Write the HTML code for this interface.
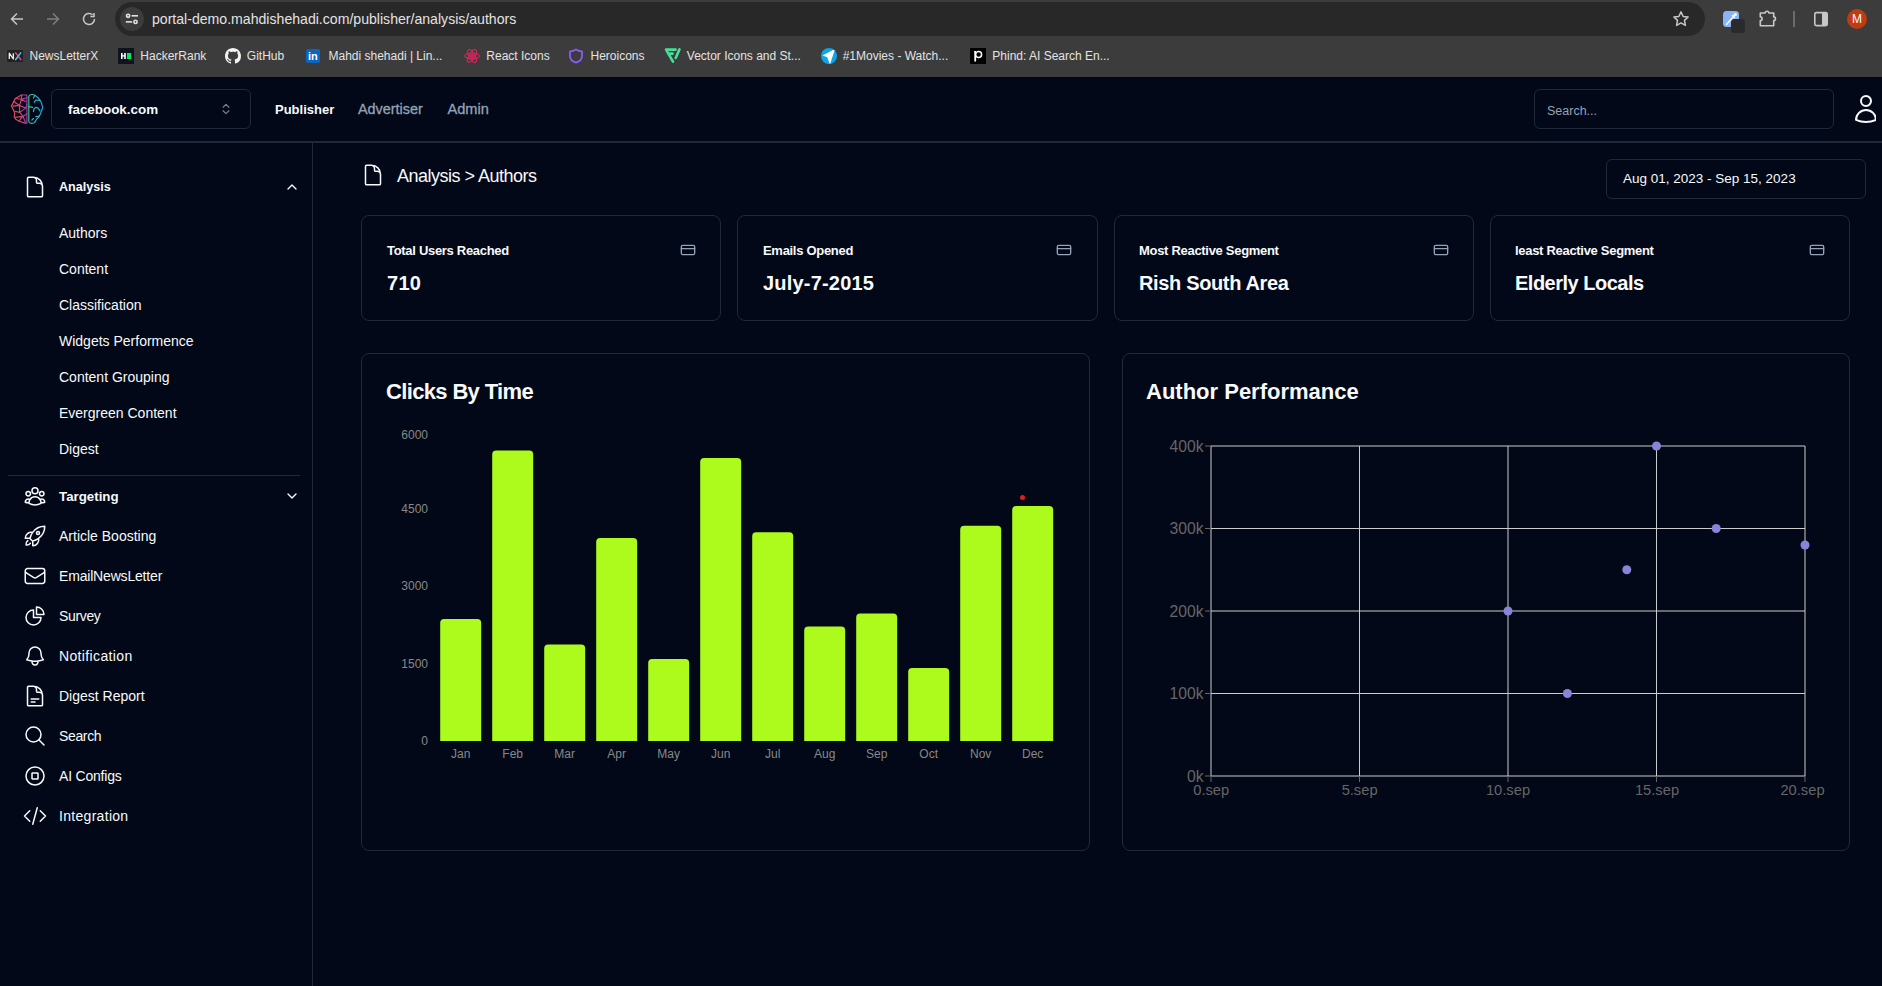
<!DOCTYPE html>
<html><head><meta charset="utf-8"><title>Analysis - Authors</title>
<style>
*{box-sizing:border-box;margin:0;padding:0}
html,body{width:1882px;height:986px;overflow:hidden;background:#020817;font-family:"Liberation Sans",sans-serif}
.t{position:absolute;line-height:1;white-space:nowrap}
.abs{position:absolute}
svg{position:absolute;overflow:visible}
</style></head><body>
<div class="abs" style="left:0;top:0;width:1882px;height:77px;background:#3c3c3c"></div>
<div class="abs" style="left:115px;top:2px;width:1590px;height:34px;border-radius:17px;background:#282828"></div>
<div class="abs" style="left:120px;top:7px;width:24px;height:24px;border-radius:12px;background:#3c3c3c"></div>
<svg style="left:126px;top:13px" width="12" height="12" viewBox="0 0 12 12" fill="none" stroke="#e3e3e3" stroke-width="1.6">
<circle cx="2.1" cy="2.8" r="1.6"/><line x1="5.6" y1="2.8" x2="12" y2="2.8"/><line x1="-0.2" y1="8.9" x2="6.2" y2="8.9"/><circle cx="9.5" cy="8.9" r="1.6"/></svg>
<svg style="left:9px;top:11px" width="16" height="16" viewBox="0 0 16 16" fill="none" stroke="#c7c7c7" stroke-width="1.5">
<path d="M14 8H2.5M8 2.5L2.5 8L8 13.5"/></svg>
<svg style="left:45px;top:11px" width="16" height="16" viewBox="0 0 16 16" fill="none" stroke="#7e7e7e" stroke-width="1.5">
<path d="M2 8h11.5M8 2.5L13.5 8L8 13.5"/></svg>
<svg style="left:81px;top:11px" width="16" height="16" viewBox="0 0 16 16" fill="none" stroke="#c7c7c7" stroke-width="1.5">
<path d="M13.5 8A5.5 5.5 0 1 1 11.6 3.8"/><path d="M13 2v3.6H9.4" /></svg>
<div class="t" style="left:152px;top:12.06px;font-size:14.1px;color:#e3e3e3;font-weight:normal;">portal-demo.mahdishehadi.com/publisher/analysis/authors</div>
<svg style="left:1672px;top:10px" width="18" height="18" viewBox="0 0 24 24" fill="none" stroke="#c7c7c7" stroke-width="2" stroke-linejoin="round">
<path d="M12 2.5l2.9 6.1 6.6.8-4.9 4.5 1.3 6.6L12 17.2l-5.9 3.3 1.3-6.6-4.9-4.5 6.6-.8z"/></svg>
<div class="abs" style="left:1723px;top:11px;width:16px;height:16px;border-radius:3.5px;background:#8ab4f8"></div>
<svg style="left:1723px;top:11px" width="16" height="16" viewBox="0 0 16 16" fill="none" stroke="#fff" stroke-linecap="round"><path d="M3.5 13.5L11 5" stroke-width="1.3"/><path d="M9.5 4.5l2 2" stroke-width="1.6"/><circle cx="12.3" cy="3.5" r="1.6" fill="#fff" stroke="none"/></svg>
<div class="abs" style="left:1731px;top:18.5px;width:14px;height:14px;border-radius:3.5px;background:#2a2a2a"></div>
<svg style="left:1758px;top:9px" width="20" height="19" viewBox="0 0 20 19" fill="none" stroke="#c7c7c7" stroke-width="1.6" stroke-linejoin="round">
<path d="M2.3 4H7.2A1.8 1.8 0 0 1 10.8 4H15.7V7.9A1.8 1.8 0 0 1 15.7 11.5V16.7H2.3V11.5A1.8 1.8 0 0 0 2.3 7.9Z"/></svg>
<div class="abs" style="left:1793px;top:11px;width:2px;height:16px;background:#6b6b6b"></div>
<svg style="left:1813px;top:11px" width="16" height="16" viewBox="0 0 16 16">
<rect x="1.8" y="1.6" width="12.4" height="13" rx="1.5" fill="none" stroke="#c7c7c7" stroke-width="1.6"/><rect x="9" y="1.8" width="5.2" height="12.6" fill="#c7c7c7"/></svg>
<div class="abs" style="left:1847px;top:9px;width:20px;height:20px;border-radius:10px;background:#c13b10"></div>
<div class="t" style="left:1857px;transform:translateX(-50%);top:13.34px;font-size:12px;color:#ffffff;font-weight:normal;">M</div>
<svg style="left:7px;top:50px" width="16" height="12" viewBox="0 0 16 12"><rect width="16" height="12" fill="#222"/><path d="M2.3 9V3.2L6.3 9V3.2" fill="none" stroke="#f2f2f2" stroke-width="1.3" stroke-linejoin="round"/><path d="M8.6 2.8L13.8 9.6" stroke="#e8456a" stroke-width="1.4" stroke-linecap="round"/><path d="M13.8 2.8L8.6 9.6" stroke="#4cc3e0" stroke-width="1.4" stroke-linecap="round"/><path d="M11.8 7L13.8 9.6" stroke="#c23ccf" stroke-width="1.4" stroke-linecap="round"/><path d="M10.6 7L8.6 9.6" stroke="#2ccfb0" stroke-width="1.4" stroke-linecap="round"/></svg>
<div class="t" style="left:29.5px;top:50.04px;font-size:12px;color:#e3e3e3;font-weight:normal;">NewsLetterX</div>
<div class="abs" style="left:118px;top:48px;width:16px;height:16px;background:#0e141e"></div>
<svg style="left:118px;top:48px" width="16" height="16" viewBox="0 0 16 16"><path d="M3 5h1.6v2.2h1.6V5h1.6v6H6.2V8.6H4.6V11H3z" fill="#fff"/><rect x="9" y="5" width="4.2" height="6" fill="#00ea64"/></svg>
<div class="t" style="left:140.3px;top:50.04px;font-size:12px;color:#e3e3e3;font-weight:normal;">HackerRank</div>
<svg style="left:225px;top:48px" width="16" height="16" viewBox="0 0 16 16"><path fill="#f2f2f2" d="M8 0C3.58 0 0 3.58 0 8c0 3.54 2.29 6.53 5.47 7.59.4.07.55-.17.55-.38 0-.19-.01-.82-.01-1.49-2.01.37-2.53-.49-2.69-.94-.09-.23-.48-.94-.82-1.13-.28-.15-.68-.52-.01-.53.63-.01 1.08.58 1.23.82.72 1.21 1.87.87 2.33.66.07-.52.28-.87.51-1.07-1.78-.2-3.64-.89-3.64-3.95 0-.87.31-1.59.82-2.15-.08-.2-.36-1.02.08-2.12 0 0 .67-.21 2.2.82.64-.18 1.32-.27 2-.27.68 0 1.36.09 2 .27 1.53-1.04 2.2-.82 2.2-.82.44 1.1.16 1.92.08 2.12.51.56.82 1.27.82 2.15 0 3.07-1.87 3.75-3.65 3.95.29.25.54.73.54 1.48 0 1.07-.01 1.93-.01 2.2 0 .21.15.46.55.38A8.013 8.013 0 0016 8c0-4.42-3.58-8-8-8z"/></svg>
<div class="t" style="left:246.8px;top:50.04px;font-size:12px;color:#e3e3e3;font-weight:normal;">GitHub</div>
<div class="abs" style="left:306px;top:49px;width:14px;height:14px;border-radius:2px;background:#0a66c2"></div>
<div class="t" style="left:308px;top:50.5px;font-size:11px;color:#fff;font-weight:bold">in</div>
<div class="t" style="left:328.5px;top:50.04px;font-size:12px;color:#e3e3e3;font-weight:normal;">Mahdi shehadi | Lin...</div>
<svg style="left:464px;top:48px" width="16" height="16" viewBox="0 0 16 16" fill="none" stroke="#e0245e" stroke-width="1.1">
<ellipse cx="8" cy="8" rx="7.2" ry="2.8"/><ellipse cx="8" cy="8" rx="7.2" ry="2.8" transform="rotate(60 8 8)"/><ellipse cx="8" cy="8" rx="7.2" ry="2.8" transform="rotate(-60 8 8)"/><circle cx="8" cy="8" r="1.3" fill="#e0245e"/></svg>
<div class="t" style="left:486.3px;top:50.04px;font-size:12px;color:#e3e3e3;font-weight:normal;">React Icons</div>
<svg style="left:568px;top:48px" width="16" height="16" viewBox="0 0 16 16" fill="none" stroke="#8b5cf6" stroke-width="1.8" stroke-linejoin="round">
<path d="M8 1.5c2 1.3 4 1.8 6 1.8v4.5c0 3.5-2.5 5.8-6 6.8-3.5-1-6-3.3-6-6.8V3.3c2 0 4-.5 6-1.8z"/></svg>
<div class="t" style="left:590.5px;top:50.04px;font-size:12px;color:#e3e3e3;font-weight:normal;">Heroicons</div>
<svg style="left:664px;top:47px" width="18" height="18" viewBox="0 0 18 18" fill="none" stroke="#4ade9a" stroke-width="2.6" stroke-linecap="round" stroke-linejoin="round">
<path d="M2 2.6H11.6M2 2.6L9 14.6M4.6 6.6H8.6M15.5 2.4L11.7 11"/></svg>
<div class="t" style="left:686.8px;top:50.04px;font-size:12px;color:#e3e3e3;font-weight:normal;">Vector Icons and St...</div>
<svg style="left:821px;top:48px" width="16" height="16" viewBox="0 0 16 16"><defs><clipPath id="mc"><circle cx="8" cy="8" r="8"/></clipPath></defs><circle cx="8" cy="8" r="8" fill="#0ea5e9"/><path d="M1.5 7.4L14 1L9 16.5L6.2 9.2z" fill="#fff" clip-path="url(#mc)"/></svg>
<div class="t" style="left:842.7px;top:50.04px;font-size:12px;color:#e3e3e3;font-weight:normal;">#1Movies - Watch...</div>
<svg style="left:970px;top:48px" width="16" height="16" viewBox="0 0 16 16"><rect width="16" height="16" rx="1" fill="#000"/><path d="M5.2 12.8V3.8" stroke="#fff" stroke-width="1.8" stroke-linecap="round"/><path d="M4.2 3.6H5.6" stroke="#fff" stroke-width="1.4"/><circle cx="8.6" cy="6.6" r="3" fill="none" stroke="#fff" stroke-width="1.5"/></svg>
<div class="t" style="left:992.3px;top:50.04px;font-size:12px;color:#e3e3e3;font-weight:normal;">Phind: AI Search En...</div>
<div class="abs" style="left:0;top:141px;width:1882px;height:2px;background:#1e293b"></div>
<svg style="left:8px;top:90px" width="40" height="38" viewBox="0 0 1038 986" fill="none" stroke-width="30" stroke-linejoin="round" stroke-linecap="round">
<defs><linearGradient id="lg1" gradientUnits="userSpaceOnUse" x1="90" y1="0" x2="500" y2="0"><stop offset="0" stop-color="#ee4d5a"/><stop offset="0.55" stop-color="#e0406e"/><stop offset="1" stop-color="#9a3cb8"/></linearGradient>
<linearGradient id="lg2" gradientUnits="userSpaceOnUse" x1="530" y1="0" x2="900" y2="0"><stop offset="0" stop-color="#3cc08a"/><stop offset="0.45" stop-color="#2fb8c8"/><stop offset="1" stop-color="#2aa8e0"/></linearGradient></defs>
<g stroke="url(#lg1)">
<path d="M490 130H350L190 220L150 300L90 420L150 540L175 600L160 700L200 760L290 810L440 860H490Z"/>
<path d="M350 130L350 240L300 400L130 420M350 240L460 300M190 220L350 240M150 300L300 400L460 470M300 400L300 580L180 550M300 580L460 470M300 580L390 680L190 710M390 680L300 790M390 680L450 840M390 680L490 620M460 470L490 380M350 240L490 200"/>
</g>
<g stroke="url(#lg2)">
<path d="M700 140C650 100 560 110 540 170V820C560 880 660 880 700 830"/>
<path d="M540 430L640 450M700 140L780 200L830 260L870 340L900 460L870 540L840 620L800 700L740 760L700 830"/>
<path d="M690 150L660 210M680 320L720 260L820 270M660 560L680 480L730 450L780 470L830 540M720 690L800 680M620 780L660 740"/>
</g>
</svg>
<div class="abs" style="left:51px;top:89px;width:200px;height:40px;border:1px solid #1e293b;border-radius:6px"></div>
<div class="t" style="left:68px;top:102.66px;font-size:13.4px;color:#f8fafc;font-weight:bold;">facebook.com</div>
<svg style="left:219px;top:102px" width="14" height="14" viewBox="0 0 24 24" fill="none" stroke="#94a3b8" stroke-width="2" stroke-linecap="round" stroke-linejoin="round" opacity="0.8">
<path d="m7 15 5 5 5-5"/><path d="m7 9 5-5 5 5"/></svg>
<div class="t" style="left:275px;top:103.00px;font-size:13px;color:#f8fafc;font-weight:bold;">Publisher</div>
<div class="t" style="left:358px;top:101.81px;font-size:14.4px;color:#94a3b8;font-weight:normal;-webkit-text-stroke:0.3px #94a3b8">Advertiser</div>
<div class="t" style="left:447.5px;top:101.64px;font-size:14.6px;color:#94a3b8;font-weight:normal;-webkit-text-stroke:0.3px #94a3b8">Admin</div>
<div class="abs" style="left:1534px;top:89px;width:300px;height:40px;border:1px solid #1e293b;border-radius:6px"></div>
<div class="t" style="left:1547px;top:105.02px;font-size:12.5px;color:#94a3b8;font-weight:normal;">Search...</div>
<div class="abs" style="left:1840px;top:90px;width:36px;height:40px;overflow:hidden"><svg style="left:10px;top:3px" width="32" height="32" viewBox="0 0 24 24" fill="none" stroke="#f8fafc" stroke-width="1.5" stroke-linecap="round" stroke-linejoin="round">
<path d="M15.75 6a3.75 3.75 0 11-7.5 0 3.75 3.75 0 017.5 0zM4.501 20.118a7.5 7.5 0 0114.998 0A17.933 17.933 0 0112 21.75c-2.676 0-5.216-.584-7.499-1.632z"/></svg></div>
<div class="abs" style="left:312px;top:143px;width:1px;height:843px;background:#1e293b"></div>
<svg style="left:23px;top:175px" width="24" height="24" viewBox="0 0 24 24" fill="none" stroke="#f8fafc" stroke-width="1.5" stroke-linecap="round" stroke-linejoin="round"><path d="M19.5 14.25v-2.625a3.375 3.375 0 00-3.375-3.375h-1.5A1.125 1.125 0 0113.5 7.125v-1.5a3.375 3.375 0 00-3.375-3.375H8.25m2.25 0H5.625c-.621 0-1.125.504-1.125 1.125v17.25c0 .621.504 1.125 1.125 1.125h12.75c.621 0 1.125-.504 1.125-1.125V11.25a9 9 0 00-9-9z"/></svg>
<div class="t" style="left:59px;top:181.33px;font-size:12.6px;color:#f8fafc;font-weight:bold;">Analysis</div>
<svg style="left:284px;top:179px" width="16" height="16" viewBox="0 0 24 24" fill="none" stroke="#f8fafc" stroke-width="2" stroke-linecap="round" stroke-linejoin="round"><path d="m18 15-6-6-6 6"/></svg>
<div class="t" style="left:59px;top:226.15px;font-size:14px;color:#f8fafc;font-weight:normal;">Authors</div>
<div class="t" style="left:59px;top:262.15px;font-size:14px;color:#f8fafc;font-weight:normal;">Content</div>
<div class="t" style="left:59px;top:298.15px;font-size:14px;color:#f8fafc;font-weight:normal;">Classification</div>
<div class="t" style="left:59px;top:334.15px;font-size:14px;color:#f8fafc;font-weight:normal;">Widgets Performence</div>
<div class="t" style="left:59px;top:370.15px;font-size:14px;color:#f8fafc;font-weight:normal;">Content Grouping</div>
<div class="t" style="left:59px;top:406.15px;font-size:14px;color:#f8fafc;font-weight:normal;">Evergreen Content</div>
<div class="t" style="left:59px;top:442.15px;font-size:14px;color:#f8fafc;font-weight:normal;">Digest</div>
<div class="abs" style="left:8px;top:475px;width:292px;height:1px;background:#1e293b"></div>
<svg style="left:23px;top:484px" width="24" height="24" viewBox="0 0 24 24" fill="none" stroke="#f8fafc" stroke-width="1.5" stroke-linecap="round" stroke-linejoin="round"><path d="M18 18.72a9.094 9.094 0 003.741-.479 3 3 0 00-4.682-2.72m.94 3.198l.001.031c0 .225-.012.447-.037.666A11.944 11.944 0 0112 21c-2.17 0-4.207-.576-5.963-1.584A6.062 6.062 0 016 18.719m12 0a5.971 5.971 0 00-.941-3.197m0 0A5.995 5.995 0 0012 12.75a5.995 5.995 0 00-5.058 2.772m0 0a3 3 0 00-4.681 2.72 8.986 8.986 0 003.74.477m.94-3.197a5.971 5.971 0 00-.94 3.197M15 6.75a3 3 0 11-6 0 3 3 0 016 0zm6 3a2.25 2.25 0 11-4.5 0 2.25 2.25 0 014.5 0zm-13.5 0a2.25 2.25 0 11-4.5 0 2.25 2.25 0 014.5 0z"/></svg>
<div class="t" style="left:59px;top:489.74px;font-size:13.3px;color:#f8fafc;font-weight:bold;">Targeting</div>
<svg style="left:284px;top:488px" width="16" height="16" viewBox="0 0 24 24" fill="none" stroke="#f8fafc" stroke-width="2" stroke-linecap="round" stroke-linejoin="round"><path d="m6 9 6 6 6-6"/></svg>
<svg style="left:23px;top:524px" width="24" height="24" viewBox="0 0 24 24" fill="none" stroke="#f8fafc" stroke-width="1.5" stroke-linecap="round" stroke-linejoin="round"><path d="M15.59 14.37a6 6 0 01-5.84 7.38v-4.8m5.84-2.58a14.98 14.98 0 006.16-12.12A14.98 14.98 0 009.631 8.41m5.96 5.96a14.926 14.926 0 01-5.841 2.58m-.119-8.54a6 6 0 00-7.381 5.84h4.8m2.581-5.84a14.927 14.927 0 00-2.58 5.84m2.699 2.7c-.103.021-.207.041-.311.06a15.09 15.09 0 01-2.448-2.448 14.9 14.9 0 01.06-.312m-2.24 2.39a4.493 4.493 0 00-1.757 4.306 4.493 4.493 0 004.306-1.758M16.5 9a1.5 1.5 0 11-3 0 1.5 1.5 0 013 0z"/></svg>
<div class="t" style="left:59px;top:529.15px;font-size:14px;color:#f8fafc;font-weight:normal;letter-spacing:0px">Article Boosting</div>
<svg style="left:23px;top:564px" width="24" height="24" viewBox="0 0 24 24" fill="none" stroke="#f8fafc" stroke-width="1.5" stroke-linecap="round" stroke-linejoin="round"><path d="M21.75 6.75v10.5a2.25 2.25 0 01-2.25 2.25h-15a2.25 2.25 0 01-2.25-2.25V6.75m19.5 0A2.25 2.25 0 0019.5 4.5h-15a2.25 2.25 0 00-2.25 2.25m19.5 0v.243a2.25 2.25 0 01-1.07 1.916l-7.5 4.615a2.25 2.25 0 01-2.36 0L3.32 8.91a2.25 2.25 0 01-1.07-1.916V6.75"/></svg>
<div class="t" style="left:59px;top:569.15px;font-size:14px;color:#f8fafc;font-weight:normal;letter-spacing:-0.18px">EmailNewsLetter</div>
<svg style="left:23px;top:604px" width="24" height="24" viewBox="0 0 24 24" fill="none" stroke="#f8fafc" stroke-width="1.5" stroke-linecap="round" stroke-linejoin="round"><path d="M10.5 6a7.5 7.5 0 107.5 7.5h-7.5V6z"/><path d="M13.5 10.5H21A7.5 7.5 0 0013.5 3v7.5z"/></svg>
<div class="t" style="left:59px;top:609.15px;font-size:14px;color:#f8fafc;font-weight:normal;letter-spacing:-0.35px">Survey</div>
<svg style="left:23px;top:644px" width="24" height="24" viewBox="0 0 24 24" fill="none" stroke="#f8fafc" stroke-width="1.5" stroke-linecap="round" stroke-linejoin="round"><path d="M14.857 17.082a23.848 23.848 0 005.454-1.31A8.967 8.967 0 0118 9.75v-.7V9A6 6 0 006 9v.75a8.967 8.967 0 01-2.312 6.022c1.733.64 3.56 1.085 5.455 1.31m5.714 0a24.255 24.255 0 01-5.714 0m5.714 0a3 3 0 11-5.714 0"/></svg>
<div class="t" style="left:59px;top:649.15px;font-size:14px;color:#f8fafc;font-weight:normal;letter-spacing:0.36px">Notification</div>
<svg style="left:23px;top:684px" width="24" height="24" viewBox="0 0 24 24" fill="none" stroke="#f8fafc" stroke-width="1.5" stroke-linecap="round" stroke-linejoin="round"><path d="M19.5 14.25v-2.625a3.375 3.375 0 00-3.375-3.375h-1.5A1.125 1.125 0 0113.5 7.125v-1.5a3.375 3.375 0 00-3.375-3.375H8.25m0 12.75h7.5m-7.5 3H12M10.5 2.25H5.625c-.621 0-1.125.504-1.125 1.125v17.25c0 .621.504 1.125 1.125 1.125h12.75c.621 0 1.125-.504 1.125-1.125V11.25a9 9 0 00-9-9z"/></svg>
<div class="t" style="left:59px;top:689.15px;font-size:14px;color:#f8fafc;font-weight:normal;letter-spacing:0px">Digest Report</div>
<svg style="left:23px;top:724px" width="24" height="24" viewBox="0 0 24 24" fill="none" stroke="#f8fafc" stroke-width="1.5" stroke-linecap="round" stroke-linejoin="round"><path d="M21 21l-5.197-5.197m0 0A7.5 7.5 0 105.196 5.196a7.5 7.5 0 0010.607 10.607z"/></svg>
<div class="t" style="left:59px;top:729.15px;font-size:14px;color:#f8fafc;font-weight:normal;letter-spacing:-0.35px">Search</div>
<svg style="left:23px;top:764px" width="24" height="24" viewBox="0 0 24 24" fill="none" stroke="#f8fafc" stroke-width="1.5" stroke-linecap="round" stroke-linejoin="round"><path d="M21 12a9 9 0 11-18 0 9 9 0 0118 0z"/><path d="M9 9.563C9 9.252 9.252 9 9.563 9h4.874c.311 0 .563.252.563.563v4.874c0 .311-.252.563-.563.563H9.564A.562.562 0 019 14.437V9.564z"/></svg>
<div class="t" style="left:59px;top:769.15px;font-size:14px;color:#f8fafc;font-weight:normal;letter-spacing:-0.2px">AI Configs</div>
<svg style="left:23px;top:804px" width="24" height="24" viewBox="0 0 24 24" fill="none" stroke="#f8fafc" stroke-width="1.5" stroke-linecap="round" stroke-linejoin="round"><path d="M17.25 6.75L22.5 12l-5.25 5.25m-10.5 0L1.5 12l5.25-5.25m7.5-3l-4.5 16.5"/></svg>
<div class="t" style="left:59px;top:809.15px;font-size:14px;color:#f8fafc;font-weight:normal;letter-spacing:0.3px">Integration</div>
<svg style="left:361px;top:163px" width="24" height="24" viewBox="0 0 24 24" fill="none" stroke="#f8fafc" stroke-width="1.5" stroke-linecap="round" stroke-linejoin="round"><path d="M19.5 14.25v-2.625a3.375 3.375 0 00-3.375-3.375h-1.5A1.125 1.125 0 0113.5 7.125v-1.5a3.375 3.375 0 00-3.375-3.375H8.25m2.25 0H5.625c-.621 0-1.125.504-1.125 1.125v17.25c0 .621.504 1.125 1.125 1.125h12.75c.621 0 1.125-.504 1.125-1.125V11.25a9 9 0 00-9-9z"/></svg>
<div class="t" style="left:397px;top:166.56px;font-size:18px;color:#f8fafc;font-weight:normal;letter-spacing:-0.5px">Analysis &gt; Authors</div>
<div class="abs" style="left:1606px;top:159px;width:260px;height:40px;border:1px solid #1e293b;border-radius:6px"></div>
<div class="t" style="left:1623px;top:172.47px;font-size:13.5px;color:#f8fafc;font-weight:normal;">Aug 01, 2023 - Sep 15, 2023</div>
<div class="abs" style="left:361px;top:215px;width:360px;height:106px;border:1px solid #1e293b;border-radius:8px"></div>
<div class="t" style="left:387px;top:244.00px;font-size:13px;color:#f8fafc;font-weight:bold;letter-spacing:-0.3px">Total Users Reached</div>
<div class="t" style="left:387px;top:272.87px;font-size:20px;color:#f8fafc;font-weight:bold;letter-spacing:0.3px">710</div>
<svg style="left:680px;top:242px" width="16" height="16" viewBox="0 0 24 24" fill="none" stroke="#94a3b8" stroke-width="2" stroke-linecap="round" stroke-linejoin="round"><rect width="20" height="14" x="2" y="5" rx="2"/><line x1="2" x2="22" y1="10" y2="10"/></svg>
<div class="abs" style="left:737px;top:215px;width:361px;height:106px;border:1px solid #1e293b;border-radius:8px"></div>
<div class="t" style="left:763px;top:244.00px;font-size:13px;color:#f8fafc;font-weight:bold;letter-spacing:-0.3px">Emails Opened</div>
<div class="t" style="left:763px;top:272.87px;font-size:20px;color:#f8fafc;font-weight:bold;letter-spacing:0.2px">July-7-2015</div>
<svg style="left:1056px;top:242px" width="16" height="16" viewBox="0 0 24 24" fill="none" stroke="#94a3b8" stroke-width="2" stroke-linecap="round" stroke-linejoin="round"><rect width="20" height="14" x="2" y="5" rx="2"/><line x1="2" x2="22" y1="10" y2="10"/></svg>
<div class="abs" style="left:1114px;top:215px;width:360px;height:106px;border:1px solid #1e293b;border-radius:8px"></div>
<div class="t" style="left:1139px;top:244.00px;font-size:13px;color:#f8fafc;font-weight:bold;letter-spacing:-0.3px">Most Reactive Segment</div>
<div class="t" style="left:1139px;top:272.87px;font-size:20px;color:#f8fafc;font-weight:bold;letter-spacing:-0.35px">Rish South Area</div>
<svg style="left:1433px;top:242px" width="16" height="16" viewBox="0 0 24 24" fill="none" stroke="#94a3b8" stroke-width="2" stroke-linecap="round" stroke-linejoin="round"><rect width="20" height="14" x="2" y="5" rx="2"/><line x1="2" x2="22" y1="10" y2="10"/></svg>
<div class="abs" style="left:1490px;top:215px;width:360px;height:106px;border:1px solid #1e293b;border-radius:8px"></div>
<div class="t" style="left:1515px;top:244.00px;font-size:13px;color:#f8fafc;font-weight:bold;letter-spacing:-0.3px">least Reactive Segment</div>
<div class="t" style="left:1515px;top:272.87px;font-size:20px;color:#f8fafc;font-weight:bold;letter-spacing:-0.5px">Elderly Locals</div>
<svg style="left:1809px;top:242px" width="16" height="16" viewBox="0 0 24 24" fill="none" stroke="#94a3b8" stroke-width="2" stroke-linecap="round" stroke-linejoin="round"><rect width="20" height="14" x="2" y="5" rx="2"/><line x1="2" x2="22" y1="10" y2="10"/></svg>
<div class="abs" style="left:361px;top:353px;width:729px;height:498px;border:1px solid #1e293b;border-radius:8px"></div>
<div class="abs" style="left:1122px;top:353px;width:728px;height:498px;border:1px solid #1e293b;border-radius:8px"></div>
<div class="t" style="left:386px;top:380.98px;font-size:22px;color:#f8fafc;font-weight:bold;letter-spacing:-0.65px">Clicks By Time</div>
<div class="t" style="left:1146px;top:381.18px;font-size:22px;color:#f8fafc;font-weight:bold;letter-spacing:0px">Author Performance</div>
<div class="t" style="right:1454px;top:428.84px;font-size:12px;color:#888888;font-weight:normal;">6000</div>
<div class="t" style="right:1454px;top:502.84px;font-size:12px;color:#888888;font-weight:normal;">4500</div>
<div class="t" style="right:1454px;top:579.84px;font-size:12px;color:#888888;font-weight:normal;">3000</div>
<div class="t" style="right:1454px;top:657.74px;font-size:12px;color:#888888;font-weight:normal;">1500</div>
<div class="t" style="right:1454px;top:734.94px;font-size:12px;color:#888888;font-weight:normal;">0</div>
<div class="t" style="left:460.7px;transform:translateX(-50%);top:748.14px;font-size:12px;color:#888888;font-weight:normal;">Jan</div>
<div class="t" style="left:512.7px;transform:translateX(-50%);top:748.14px;font-size:12px;color:#888888;font-weight:normal;">Feb</div>
<div class="t" style="left:564.7px;transform:translateX(-50%);top:748.14px;font-size:12px;color:#888888;font-weight:normal;">Mar</div>
<div class="t" style="left:616.7px;transform:translateX(-50%);top:748.14px;font-size:12px;color:#888888;font-weight:normal;">Apr</div>
<div class="t" style="left:668.7px;transform:translateX(-50%);top:748.14px;font-size:12px;color:#888888;font-weight:normal;">May</div>
<div class="t" style="left:720.7px;transform:translateX(-50%);top:748.14px;font-size:12px;color:#888888;font-weight:normal;">Jun</div>
<div class="t" style="left:772.7px;transform:translateX(-50%);top:748.14px;font-size:12px;color:#888888;font-weight:normal;">Jul</div>
<div class="t" style="left:824.7px;transform:translateX(-50%);top:748.14px;font-size:12px;color:#888888;font-weight:normal;">Aug</div>
<div class="t" style="left:876.7px;transform:translateX(-50%);top:748.14px;font-size:12px;color:#888888;font-weight:normal;">Sep</div>
<div class="t" style="left:928.7px;transform:translateX(-50%);top:748.14px;font-size:12px;color:#888888;font-weight:normal;">Oct</div>
<div class="t" style="left:980.7px;transform:translateX(-50%);top:748.14px;font-size:12px;color:#888888;font-weight:normal;">Nov</div>
<div class="t" style="left:1032.7px;transform:translateX(-50%);top:748.14px;font-size:12px;color:#888888;font-weight:normal;">Dec</div>
<svg style="left:0;top:0" width="1882" height="986" fill="#adfa1d"><path d="M440.20,741V622.90a4,4 0 0 1 4,-4h33a4,4 0 0 1 4,4V741z"/><path d="M492.20,741V454.50a4,4 0 0 1 4,-4h33a4,4 0 0 1 4,4V741z"/><path d="M544.20,741V648.40a4,4 0 0 1 4,-4h33a4,4 0 0 1 4,4V741z"/><path d="M596.20,741V542.10a4,4 0 0 1 4,-4h33a4,4 0 0 1 4,4V741z"/><path d="M648.20,741V663.00a4,4 0 0 1 4,-4h33a4,4 0 0 1 4,4V741z"/><path d="M700.20,741V462.00a4,4 0 0 1 4,-4h33a4,4 0 0 1 4,4V741z"/><path d="M752.20,741V536.30a4,4 0 0 1 4,-4h33a4,4 0 0 1 4,4V741z"/><path d="M804.20,741V630.50a4,4 0 0 1 4,-4h33a4,4 0 0 1 4,4V741z"/><path d="M856.20,741V617.60a4,4 0 0 1 4,-4h33a4,4 0 0 1 4,4V741z"/><path d="M908.20,741V672.10a4,4 0 0 1 4,-4h33a4,4 0 0 1 4,4V741z"/><path d="M960.20,741V529.80a4,4 0 0 1 4,-4h33a4,4 0 0 1 4,4V741z"/><path d="M1012.20,741V510.00a4,4 0 0 1 4,-4h33a4,4 0 0 1 4,4V741z"/></svg>
<div class="abs" style="left:1020px;top:495px;width:5px;height:5px;border-radius:3px;background:#e11d1d"></div>
<svg style="left:0;top:0" width="1882" height="986"><g stroke="#cccccc" stroke-width="1"><line x1="1211" y1="446" x2="1211" y2="776"/><line x1="1359.5" y1="446" x2="1359.5" y2="776"/><line x1="1508" y1="446" x2="1508" y2="776"/><line x1="1656.5" y1="446" x2="1656.5" y2="776"/><line x1="1805" y1="446" x2="1805" y2="776"/><line x1="1211" y1="446" x2="1805" y2="446"/><line x1="1211" y1="528.5" x2="1805" y2="528.5"/><line x1="1211" y1="611" x2="1805" y2="611"/><line x1="1211" y1="693.5" x2="1805" y2="693.5"/><line x1="1211" y1="776" x2="1805" y2="776"/></g><g stroke="#666" stroke-width="1"><line x1="1205" y1="446" x2="1211" y2="446"/><line x1="1205" y1="528.5" x2="1211" y2="528.5"/><line x1="1205" y1="611" x2="1211" y2="611"/><line x1="1205" y1="693.5" x2="1211" y2="693.5"/><line x1="1205" y1="776" x2="1211" y2="776"/><line x1="1211" y1="776" x2="1211" y2="782"/><line x1="1359.5" y1="776" x2="1359.5" y2="782"/><line x1="1508" y1="776" x2="1508" y2="782"/><line x1="1656.5" y1="776" x2="1656.5" y2="782"/><line x1="1805" y1="776" x2="1805" y2="782"/></g><g fill="#8884d8"><circle cx="1508" cy="611" r="4.51"/><circle cx="1567.4" cy="693.5" r="4.51"/><circle cx="1626.8" cy="569.75" r="4.51"/><circle cx="1656.5" cy="446" r="4.51"/><circle cx="1716.2" cy="528.5" r="4.51"/><circle cx="1805" cy="545" r="4.51"/></g></svg>
<div class="t" style="right:678.5px;top:438.61px;font-size:15.7px;color:#666666;font-weight:normal;">400k</div>
<div class="t" style="right:678.5px;top:521.11px;font-size:15.7px;color:#666666;font-weight:normal;">300k</div>
<div class="t" style="right:678.5px;top:603.61px;font-size:15.7px;color:#666666;font-weight:normal;">200k</div>
<div class="t" style="right:678.5px;top:686.11px;font-size:15.7px;color:#666666;font-weight:normal;">100k</div>
<div class="t" style="right:678.5px;top:768.61px;font-size:15.7px;color:#666666;font-weight:normal;">0k</div>
<div class="t" style="left:1211.2px;transform:translateX(-50%);top:783.36px;font-size:14.7px;color:#666666;font-weight:normal;">0.sep</div>
<div class="t" style="left:1359.6px;transform:translateX(-50%);top:783.36px;font-size:14.7px;color:#666666;font-weight:normal;">5.sep</div>
<div class="t" style="left:1508px;transform:translateX(-50%);top:783.36px;font-size:14.7px;color:#666666;font-weight:normal;">10.sep</div>
<div class="t" style="left:1657px;transform:translateX(-50%);top:783.36px;font-size:14.7px;color:#666666;font-weight:normal;">15.sep</div>
<div class="t" style="left:1802.5px;transform:translateX(-50%);top:783.36px;font-size:14.7px;color:#666666;font-weight:normal;">20.sep</div>
</body></html>
